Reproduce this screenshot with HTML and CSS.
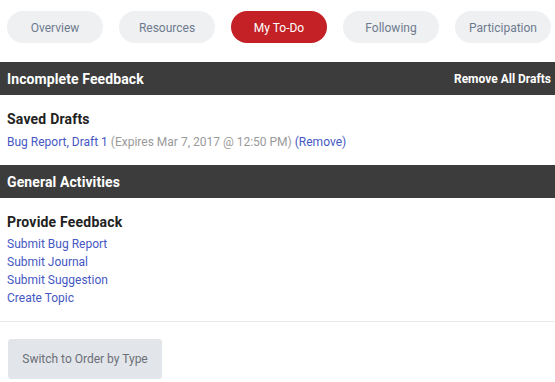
FILE: index.html
```html
<!DOCTYPE html>
<html>
<head>
<meta charset="utf-8">
<link rel="stylesheet" href="styles.css">
</head>
<body>
<nav class="tabs">
  <a class="tab">Overview</a>
  <a class="tab">Resources</a>
  <a class="tab active">My To-Do</a>
  <a class="tab">Following</a>
  <a class="tab">Participation</a>
</nav>
<div class="bar"><span class="bar-title">Incomplete Feedback</span><a class="bar-action">Remove All Drafts</a></div>
<section class="section">
  <h3 class="heading">Saved Drafts</h3>
  <div class="line"><a class="link">Bug Report, Draft 1</a> <span class="muted">(Expires Mar 7, 2017 @ 12:50 PM)</span> <a class="link">(Remove)</a></div>
</section>
<div class="bar"><span class="bar-title">General Activities</span></div>
<section class="section section-activities">
  <h3 class="heading">Provide Feedback</h3>
  <ul class="links">
    <li><a class="link">Submit Bug Report</a></li>
    <li><a class="link">Submit Journal</a></li>
    <li><a class="link">Submit Suggestion</a></li>
    <li><a class="link">Create Topic</a></li>
  </ul>
</section>
<div class="footer">
  <button class="switch">Switch to Order by Type</button>
</div>
</body>
</html>
```
FILE: styles.css
```css
* { box-sizing: border-box; }
body {
  margin: 0;
  font-family: Roboto, "Liberation Sans", sans-serif;
  background: #fff;
  color: #222;
}
.tabs {
  display: flex;
  gap: 16px;
  padding: 11px 4px 0 7px;
  height: 62px;
}
.tab {
  flex: 0 0 96px;
  height: 32px;
  padding-top: 1px;
  border-radius: 16px;
  background: #eef0f2;
  color: #6e7b8f;
  font-size: 12px;
  display: flex;
  align-items: center;
  justify-content: center;
}
.tab.active {
  background: #c32126;
  color: #fff;
}
.bar {
  height: 33px;
  background: #3c3c3c;
  color: #fff;
  display: flex;
  align-items: center;
  justify-content: space-between;
  padding: 0 4px 0 7px;
  font-weight: bold;
  font-size: 14px;
}
.bar-title { letter-spacing: 0.1px; }
.bar-action {
  font-size: 12px;
}
.section {
  padding: 14px 7px 14px;
}
.heading {
  margin: 0 0 4px;
  font-size: 14px;
  font-weight: bold;
  color: #222;
  line-height: 20px;
  letter-spacing: 0.2px;
}
.line {
  font-size: 12px;
  line-height: 18px;
}
.link { color: #4558c4; }
.muted { color: #9a9a9a; }
.section-activities {
  padding: 14px 7px 14px;
  border-bottom: 1px solid #eaeaea;
}
.section-activities .heading { margin-bottom: 3px; }
.links {
  list-style: none;
  margin: 0;
  padding: 0;
  font-size: 12px;
  line-height: 18px;
}
.footer {
  padding: 17px 7px;
}
.switch {
  width: 154px;
  height: 40px;
  background: #e2e5e9;
  border: none;
  border-radius: 3px;
  color: #6b6f78;
  font-family: Roboto, "Liberation Sans", sans-serif;
  font-size: 12px;
  padding: 0;
  margin-left: 1px;
}
```
